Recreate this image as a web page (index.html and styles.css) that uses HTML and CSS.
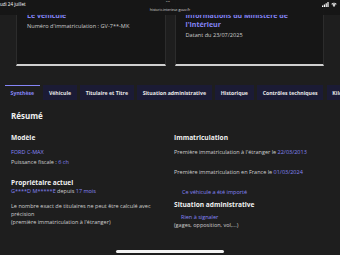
FILE: index.html
```html
<!DOCTYPE html>
<html lang="fr">
<head>
    <meta charset="UTF-8">
    <meta name="viewport" content="width=device-width, initial-scale=1.0">
    <title>Historique du véhicule</title>
    <link rel="stylesheet" href="styles.css">
</head>
<body>
    <div class="statusbar">
        <span class="date">udi 24 juillet</span>
        <span class="dots">•••</span>
        <span class="url">historic.interieur.gouv.fr</span>
        <span class="icons">
            <svg width="7" height="5" viewBox="0 0 7 5">
                <rect x="0" y="3.5" width="1.2" height="1.5" fill="#fff"/>
                <rect x="1.8" y="2.5" width="1.2" height="2.5" fill="#fff"/>
                <rect x="3.6" y="1.3" width="1.2" height="3.7" fill="#fff"/>
                <rect x="5.4" y="0" width="1.2" height="5" fill="#fff"/>
            </svg>
            <svg width="6" height="5" viewBox="0 0 12 10">
                <path d="M6 10 L3.6 7.2 A3.6 3.6 0 0 1 8.4 7.2 Z" fill="#fff"/>
                <path d="M2.2 5.6 A5.6 5.6 0 0 1 9.8 5.6 L8.8 6.7 A4.2 4.2 0 0 0 3.2 6.7 Z" fill="#fff"/>
                <path d="M0.6 3.8 A8 8 0 0 1 11.4 3.8 L10.4 4.9 A6.6 6.6 0 0 0 1.6 4.9 Z" fill="#fff"/>
            </svg>
        </span>
    </div>

    <div class="cards">
        <div class="card">
            <h2 class="card-title">Le véhicule</h2>
            <p class="card-desc">Numéro d'immatriculation : GV-7**-MK</p>
        </div>
        <div class="card">
            <h2 class="card-title">Informations du Ministère de l'Intérieur</h2>
            <p class="card-desc">Datant du 23/07/2025</p>
        </div>
    </div>

    <ul class="tabs">
        <li class="tab selected">Synthèse</li>
        <li class="tab">Véhicule</li>
        <li class="tab">Titulaire et Titre</li>
        <li class="tab">Situation administrative</li>
        <li class="tab">Historique</li>
        <li class="tab">Contrôles techniques</li>
        <li class="tab">Kilométrage</li>
    </ul>

    <div class="panel">
        <h2 class="panel-title">Résumé</h2>
        <div class="columns">
            <div class="col">
                <h3>Modèle</h3>
                <p class="link model">FORD C-MAX</p>
                <p class="power">Puissance fiscale : <span class="link">6 ch</span></p>
                <h3 class="owner">Propriétaire actuel</h3>
                <p><span class="link">G****D M*****E</span> depuis <span class="link">17 mois</span></p>
                <p class="note">Le nombre exact de titulaires ne peut être calculé avec précision<br>(première immatriculation à l'étranger)</p>
            </div>
            <div class="col">
                <h3>Immatriculation</h3>
                <p class="first">Première immatriculation à l'étranger le <span class="link">22/03/2013</span></p>
                <p class="spaced">Première immatriculation en France le <span class="link">01/03/2024</span></p>
                <p class="link spaced indent">Ce véhicule a été importé</p>
                <h3 class="admin">Situation administrative</h3>
                <p class="link indent ok">Rien à signaler</p>
                <p>(gages, opposition, vol,...)</p>
            </div>
        </div>
    </div>

    <div class="home-bar"></div>
</body>
</html>
```

FILE: styles.css
```css
body {
    font-family: 'Open Sans', 'Liberation Sans', sans-serif;
    background-color: #1e1e1e;
    margin: 0;
    color: #cecece;
    font-size: 5.5px;
    line-height: 8px;
    overflow: hidden;
}
p, h2, h3, ul {
    margin: 0;
    padding: 0;
}
.link {
    color: #8585f6;
}

/* barre du navigateur */
.statusbar {
    position: absolute;
    top: 0;
    left: 0;
    right: 0;
    height: 14.5px;
    background: rgba(22, 22, 22, 0.94);
    color: #fff;
    z-index: 2;
}
.date {
    position: absolute;
    left: 0;
    top: 1px;
    font-size: 4.5px;
    line-height: 6px;
}
.dots {
    position: absolute;
    left: 166px;
    top: -1px;
    font-size: 3px;
    line-height: 6px;
    color: #bbb;
    letter-spacing: 0.3px;
}
.url {
    position: absolute;
    left: 0;
    right: 0;
    top: 6.5px;
    text-align: center;
    font-size: 3.6px;
    line-height: 5px;
    color: #ddd;
}
.icons {
    position: absolute;
    right: 3px;
    top: 2px;
    display: flex;
    gap: 2px;
    align-items: flex-end;
}

/* cartes */
.cards {
    display: grid;
    grid-template-columns: 1fr 1fr;
    gap: 9px;
    padding: 0 16px;
    margin-top: -6px;
}
.card {
    background: #161616;
    border: 1px solid #2c2c2c;
    border-bottom: 2px solid #cfcfcf;
    padding: 15.5px 10px 25px;
}
.card-title {
    color: #8585f6;
    font-size: 7px;
    line-height: 9px;
    font-weight: bold;
}
.card-desc {
    margin-top: 2px;
    font-size: 5.6px;
}

/* onglets */
.tabs {
    list-style: none;
    display: flex;
    gap: 3.5px;
    margin-top: 19px;
    padding: 0 5px;
    white-space: nowrap;
    overflow: hidden;
}
.tab {
    background: #1b1b35;
    color: #e8e8e8;
    font-weight: bold;
    font-size: 5.2px;
    line-height: 8px;
    padding: 3px 5.6px;
    border-top: 1px solid transparent;
}
.tab.selected {
    background: #1e1e1e;
    color: #8585f6;
    border-top-color: #8585f6;
}

/* contenu */
.panel {
    padding: 10px 11px 0;
}
.panel-title {
    color: #f0f0f0;
    font-size: 8px;
    line-height: 11px;
    font-weight: bold;
}
.columns {
    display: grid;
    grid-template-columns: 1fr 1fr;
    gap: 8px;
    margin-top: 12px;
}
h3 {
    color: #f0f0f0;
    font-size: 6.6px;
    line-height: 9px;
    font-weight: bold;
}
.model, .first {
    margin-top: 6.5px;
}
.power {
    margin-top: 2px;
}
.owner {
    margin-top: 11.5px;
}
.note {
    margin-top: 7.5px;
}
.spaced {
    margin-top: 12px;
}
.indent {
    padding-left: 8px;
}
.admin {
    margin-top: 3.5px;
}
.ok {
    margin-top: 4.5px;
    padding-left: 7px;
}

.home-bar {
    position: absolute;
    left: 116px;
    top: 250px;
    width: 108px;
    height: 3px;
    border-radius: 2px;
    background: #f2f2f2;
}
```
